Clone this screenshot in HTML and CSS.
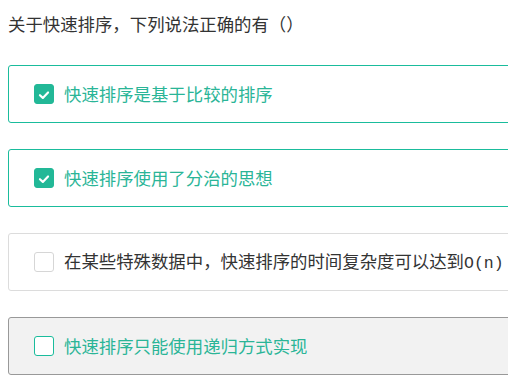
FILE: index.html
```html
<!DOCTYPE html>
<html lang="zh-CN">
<head>
<meta charset="utf-8">
<title>快速排序</title>
<link rel="stylesheet" href="styles.css">
</head>
<body>
<div class="question">
  <div class="title">关于快速排序，下列说法正确的有（）</div>
  <ul class="options">
    <li class="option selected">
      <span class="box"><svg viewBox="0 0 20 20" width="20" height="20"><polyline points="5.5,10.2 8.7,13.2 14.5,7.2" fill="none" stroke="#fff" stroke-width="2.4" stroke-linecap="round" stroke-linejoin="round"/></svg></span>
      <span class="label">快速排序是基于比较的排序</span>
    </li>
    <li class="option selected">
      <span class="box"><svg viewBox="0 0 20 20" width="20" height="20"><polyline points="5.5,10.2 8.7,13.2 14.5,7.2" fill="none" stroke="#fff" stroke-width="2.4" stroke-linecap="round" stroke-linejoin="round"/></svg></span>
      <span class="label">快速排序使用了分治的思想</span>
    </li>
    <li class="option">
      <span class="box"></span>
      <span class="label">在某些特殊数据中，快速排序的时间复杂度可以达到<span class="mono">O(n)</span></span>
    </li>
    <li class="option hover">
      <span class="box"></span>
      <span class="label">快速排序只能使用递归方式实现</span>
    </li>
  </ul>
</div>
</body>
</html>
```

FILE: styles.css
```css
html, body {
  margin: 0;
  padding: 0;
  overflow: hidden;
  background: #fff;
}
body {
  font-family: "Noto Sans CJK SC", "Noto Sans", sans-serif;
  color: #333;
}
.question {
  padding: 12px 0 0 8px;
  width: 620px;
}
.title {
  font-size: 17.4px;
  line-height: 24px;
  height: 24px;
  color: #333;
  margin-bottom: 29px;
}
.options {
  list-style: none;
  margin: 0;
  padding: 0;
}
.option {
  box-sizing: border-box;
  height: 58px;
  border: 1px solid #dcdcdc;
  border-radius: 3px;
  margin-bottom: 26px;
  padding-left: 25px;
  display: flex;
  align-items: center;
  gap: 10px;
  background: #fff;
}
.box {
  box-sizing: border-box;
  width: 20px;
  height: 20px;
  border: 1px solid #d6d6d6;
  border-radius: 3px;
  background: #fff;
  display: flex;
  flex: none;
}
.label {
  font-size: 17.4px;
  line-height: 24px;
  color: #333;
  white-space: nowrap;
}
.mono {
  font-family: "Liberation Mono", monospace;
  font-size: 16.5px;
}
.option.selected {
  border-color: #1abc9c;
}
.option.selected .box {
  border-color: #22b897;
  background: #22b897;
}
.option.selected .label,
.option.hover .label {
  color: #2ab597;
}
.option.hover {
  background: #f2f2f2;
  border-color: #999;
}
.option.hover .box {
  border: 1.5px solid #1abc9c;
  background: #fff;
}
```
